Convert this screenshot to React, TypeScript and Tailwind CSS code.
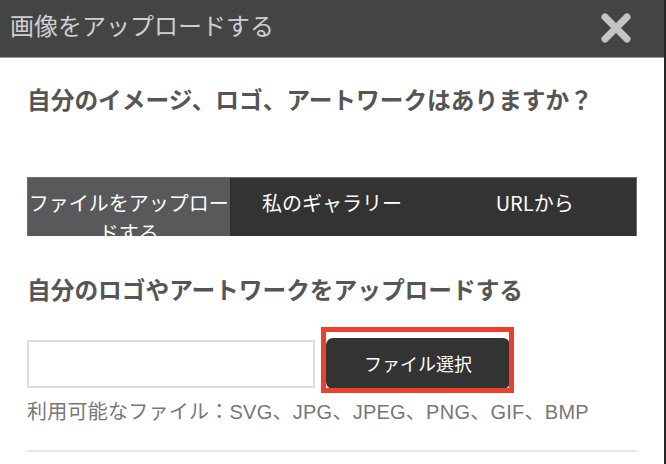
import React from "react";

const jp = { fontFamily: '"Noto Sans CJK JP", "Noto Sans", sans-serif' };
const mixed = { fontFamily: '"Liberation Sans", "Noto Sans CJK JP", sans-serif' };

function CloseIcon() {
	return (
		<svg width="32" height="32" viewBox="0 0 32 32" className="block">
			<path d="M5 5 L27 27 M27 5 L5 27" stroke="#c4c4c4" strokeWidth="7" strokeLinecap="round" />
		</svg>
	);
}

export default function App() {
	const tabs = ["ファイルをアップロードする", "私のギャラリー", "URLから"];
	return (
		<div className="w-[666px] h-[464px] overflow-hidden bg-white border-r-2 border-[#262626]" style={jp}>
			<header className="h-[58px] bg-[#444444] border-b border-[#9a9a9a] flex items-center justify-between pl-[10px] pr-[32px]">
				<div className="text-[24px] leading-[34px] text-[#cfcfcf] -mt-[8px]">画像をアップロードする</div>
				<div className="-mt-[1px]">
					<CloseIcon />
				</div>
			</header>
			<div className="px-[27px]">
				<h2 className="mt-[24px] text-[23.7px] leading-[34px] font-bold text-[#555555]">
					自分のイメージ、ロゴ、アートワークはありますか？
				</h2>
				<div className="mt-[61px] grid grid-cols-3 h-[59px] border-t border-x border-[#6f6f6f]">
					{tabs.map((t, i) => (
						<div
							key={t}
							className={
								i === 0
									? "bg-[#58595b] text-white text-[20px] leading-[30px] pt-[10px] text-center overflow-hidden border-r border-[#2a2a2a]"
									: "bg-[#333333] text-white text-[20px] leading-[30px] pt-[10px] text-center overflow-hidden"
							}
						>
							{t}
						</div>
					))}
				</div>
				<h3 className="mt-[36px] text-[23.7px] leading-[34px] font-bold text-[#555555]">
					自分のロゴやアートワークをアップロードする
				</h3>
				<div className="mt-[32px] flex items-center gap-[11px]">
					<input className="w-[288px] h-[48px] border-2 border-[#dcdcdc] outline-none" />
					<div className="relative">
						<button className="w-[184px] h-[51px] rounded-[7px] bg-[#333333] text-white text-[18px]" style={jp}>
							ファイル選択
						</button>
						<span className="absolute -left-[5px] -top-[11px] w-[193px] h-[66px] border-[5px] border-[#e8412c] pointer-events-none" />
					</div>
				</div>
				<p className="mt-[10px] text-[20px] leading-[27px] tracking-[0.25px] text-[#777777]" style={mixed}>
					利用可能なファイル：SVG、JPG、JPEG、PNG、GIF、BMP
				</p>
				<div className="mt-[24px] h-[2px] bg-[#e6e6e6]" />
			</div>
		</div>
	);
}
